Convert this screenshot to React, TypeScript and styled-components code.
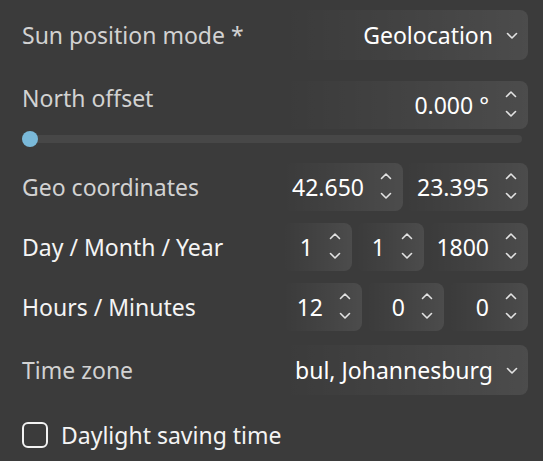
import styled, { createGlobalStyle } from "styled-components";

const GlobalStyle = createGlobalStyle`
  html, body {
    margin: 0;
    padding: 0;
    background: #3b3b3b;
  }
  body {
    font-family: "Noto Sans", "Open Sans", sans-serif;
    color: #fff;
  }
`;

const Panel = styled.div`
  width: 543px;
  height: 461px;
  box-sizing: border-box;
  padding: 10px 15px 0 22px;
  display: flex;
  flex-direction: column;
  background: #3b3b3b;
`;

const Row = styled.div<{ $gap?: number; $top?: boolean }>`
  display: flex;
  justify-content: space-between;
  align-items: ${({ $top }) => ($top ? "flex-start" : "center")};
  margin-bottom: ${({ $gap }) => $gap ?? 12}px;
`;

const Label = styled.span<{ $muted?: boolean; $offset?: number }>`
  font-size: 23px;
  line-height: 30px;
  color: ${({ $muted }) => ($muted ? "#d2d2d2" : "#f4f4f4")};
  padding-top: ${({ $offset }) => $offset ?? 0}px;
  white-space: nowrap;
`;

const Fields = styled.div<{ $gap?: number }>`
  display: flex;
  gap: ${({ $gap }) => $gap ?? 4}px;
`;

const Field = styled.div<{ $w: number; $h?: number }>`
  width: ${({ $w }) => $w}px;
  height: ${({ $h }) => $h ?? 48}px;
  box-sizing: border-box;
  border-radius: 8px;
  background: linear-gradient(
    to right,
    rgba(255, 255, 255, 0) 0%,
    rgba(255, 255, 255, 0.035) 45%,
    rgba(255, 255, 255, 0.085) 100%
  );
  display: flex;
  align-items: center;
  justify-content: flex-end;
  padding-right: 10px;
  overflow: hidden;
`;

const Value = styled.span`
  font-size: 23px;
  line-height: 30px;
  color: #fff;
  white-space: nowrap;
`;

const Spinner = styled.div`
  width: 14px;
  height: 100%;
  margin-left: 15px;
  display: flex;
  flex-direction: column;
  justify-content: space-between;
  align-items: center;
  padding: 9px 0 11px;
  box-sizing: border-box;
`;

const Chevron = ({ up }: { up?: boolean }) => (
  <svg width="12" height="8" viewBox="0 0 12 8">
    <path
      d={up ? "M1.5 6.5 L6 2 L10.5 6.5" : "M1.5 1.5 L6 6 L10.5 1.5"}
      fill="none"
      stroke="#e2e2e2"
      strokeWidth="1.6"
      strokeLinecap="round"
      strokeLinejoin="round"
    />
  </svg>
);

const SelectArrow = styled.span`
  display: flex;
  margin-left: 13px;
  margin-top: 2px;
`;

const NumberField = ({ w, value }: { w: number; value: string }) => (
  <Field $w={w}>
    <Value>{value}</Value>
    <Spinner>
      <Chevron up />
      <Chevron />
    </Spinner>
  </Field>
);

const SelectField = ({ value }: { value: string }) => (
  <Field $w={245} $h={50}>
    <Value>{value}</Value>
    <SelectArrow>
      <Chevron />
    </SelectArrow>
  </Field>
);

const Slider = styled.div`
  position: relative;
  height: 16px;
  width: 500px;
  display: flex;
  align-items: center;
  margin: 2px 0 16px;
`;

const Track = styled.div`
  flex: 1;
  height: 8px;
  border-radius: 4px;
  background: #474747;
`;

const Thumb = styled.div`
  position: absolute;
  left: 0;
  top: 0;
  width: 16px;
  height: 16px;
  border-radius: 50%;
  background: #7ab9d9;
`;

const CheckRow = styled.label`
  display: flex;
  align-items: center;
  gap: 13px;
  margin-top: 25px;
`;

const Box = styled.span`
  width: 26px;
  height: 26px;
  box-sizing: border-box;
  border: 2px solid #f2f2f2;
  border-radius: 6px;
`;

const App = () => {
  return (
    <>
      <GlobalStyle />
      <Panel>
        <Row $gap={21}>
          <Label $muted>Sun position mode *</Label>
          <SelectField value="Geolocation" />
        </Row>

        <Row $top $gap={0}>
          <Label $muted $offset={2}>North offset</Label>
          <Field $w={245}>
            <Value>0.000 °</Value>
            <Spinner>
              <Chevron up />
              <Chevron />
            </Spinner>
          </Field>
        </Row>
        <Slider>
          <Track />
          <Thumb />
        </Slider>

        <Row>
          <Label $muted>Geo coordinates</Label>
          <Fields $gap={2}>
            <NumberField w={120} value="42.650" />
            <NumberField w={123} value="23.395" />
          </Fields>
        </Row>

        <Row>
          <Label>Day / Month / Year</Label>
          <Fields $gap={4}>
            <NumberField w={69} value="1" />
            <NumberField w={68} value="1" />
            <NumberField w={100} value="1800" />
          </Fields>
        </Row>

        <Row $gap={14}>
          <Label>Hours / Minutes</Label>
          <Fields $gap={4}>
            <NumberField w={79} value="12" />
            <NumberField w={78} value="0" />
            <NumberField w={80} value="0" />
          </Fields>
        </Row>

        <Row $gap={0}>
          <Label $muted>Time zone</Label>
          <SelectField value="bul, Johannesburg" />
        </Row>

        <CheckRow>
          <Box />
          <Label>Daylight saving time</Label>
        </CheckRow>
      </Panel>
    </>
  );
};

export default App;
